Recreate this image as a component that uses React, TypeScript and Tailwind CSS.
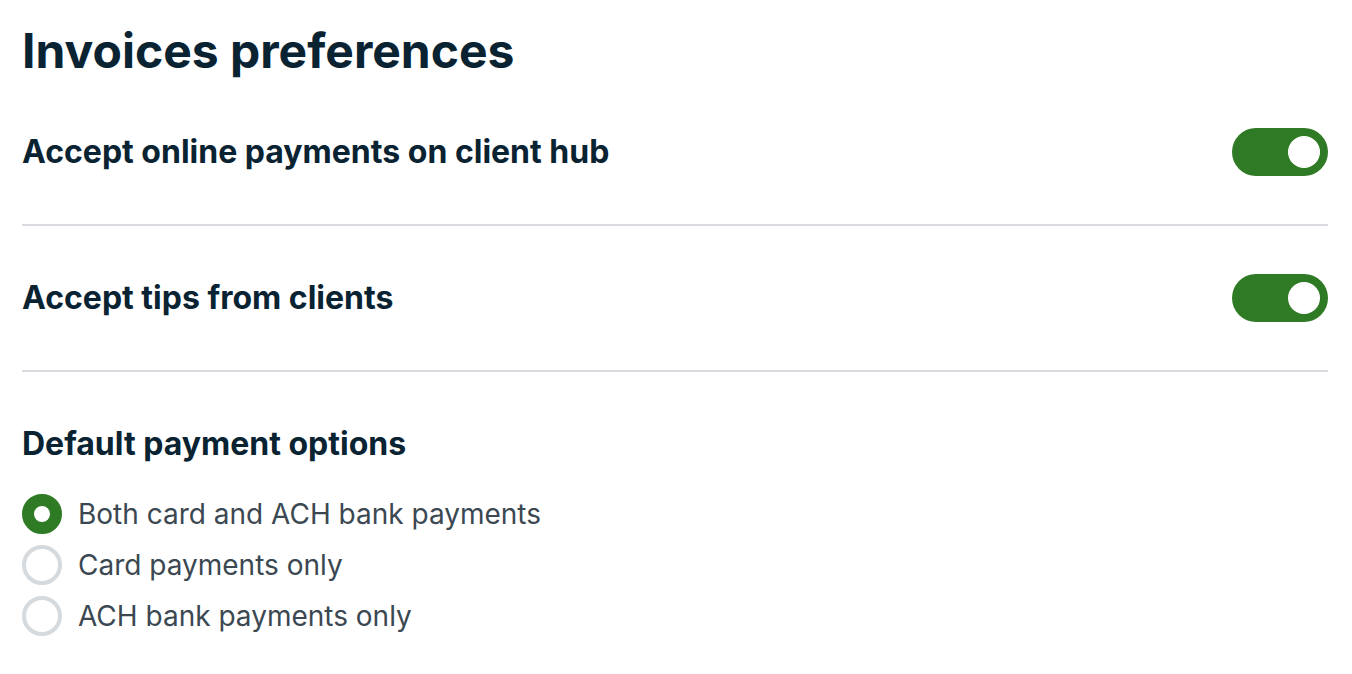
import React, { useState } from "react";

type Option = {
  id: string;
  label: string;
};

const OPTIONS: Option[] = [
  { id: "both", label: "Both card and ACH bank payments" },
  { id: "card", label: "Card payments only" },
  { id: "ach", label: "ACH bank payments only" },
];

const Toggle = ({ on, onChange }: { on: boolean; onChange: () => void }) => (
  <button
    type="button"
    onClick={onChange}
    className={`flex h-12 w-24 shrink-0 items-center rounded-full px-2 transition ${
      on ? "justify-end bg-[#2f7a25]" : "justify-start bg-[#d5dade]"
    }`}
  >
    <span className="h-8 w-8 rounded-full bg-white" />
  </button>
);

const App = () => {
  const [online, setOnline] = useState(true);
  const [tips, setTips] = useState(true);
  const [selected, setSelected] = useState("both");

  return (
    <div className="min-h-screen bg-white pl-[22px] pr-6 pt-[22px] font-['Inter',sans-serif] text-[#0a2332]">
      <h1 className="text-[48px] font-bold leading-[58px]">Invoices preferences</h1>

      <div className="flex items-center justify-between border-b-2 border-[#d8dce0] py-12">
        <h2 className="text-[32px] font-bold leading-[40px]">
          Accept online payments on client hub
        </h2>
        <Toggle on={online} onChange={() => setOnline(!online)} />
      </div>

      <div className="flex items-center justify-between border-b-2 border-[#d8dce0] py-12">
        <h2 className="text-[32px] font-bold leading-[40px]">Accept tips from clients</h2>
        <Toggle on={tips} onChange={() => setTips(!tips)} />
      </div>

      <div className="pt-[52px]">
        <h3 className="text-[32px] font-bold leading-[40px]">Default payment options</h3>
        <div className="mt-[29px] flex flex-col gap-[9px]">
          {OPTIONS.map((o) => {
            const active = o.id === selected;
            return (
              <label
                key={o.id}
                onClick={() => setSelected(o.id)}
                className="flex h-[42px] cursor-pointer items-center gap-4"
              >
                <span
                  className={`h-10 w-10 shrink-0 rounded-full bg-white ${
                    active ? "border-[12px] border-[#2f7a25]" : "border-4 border-[#d5dade]"
                  }`}
                />
                <span className="text-[28px] leading-[42px] text-[#3b4852]">{o.label}</span>
              </label>
            );
          })}
        </div>
      </div>
    </div>
  );
};

export default App;
